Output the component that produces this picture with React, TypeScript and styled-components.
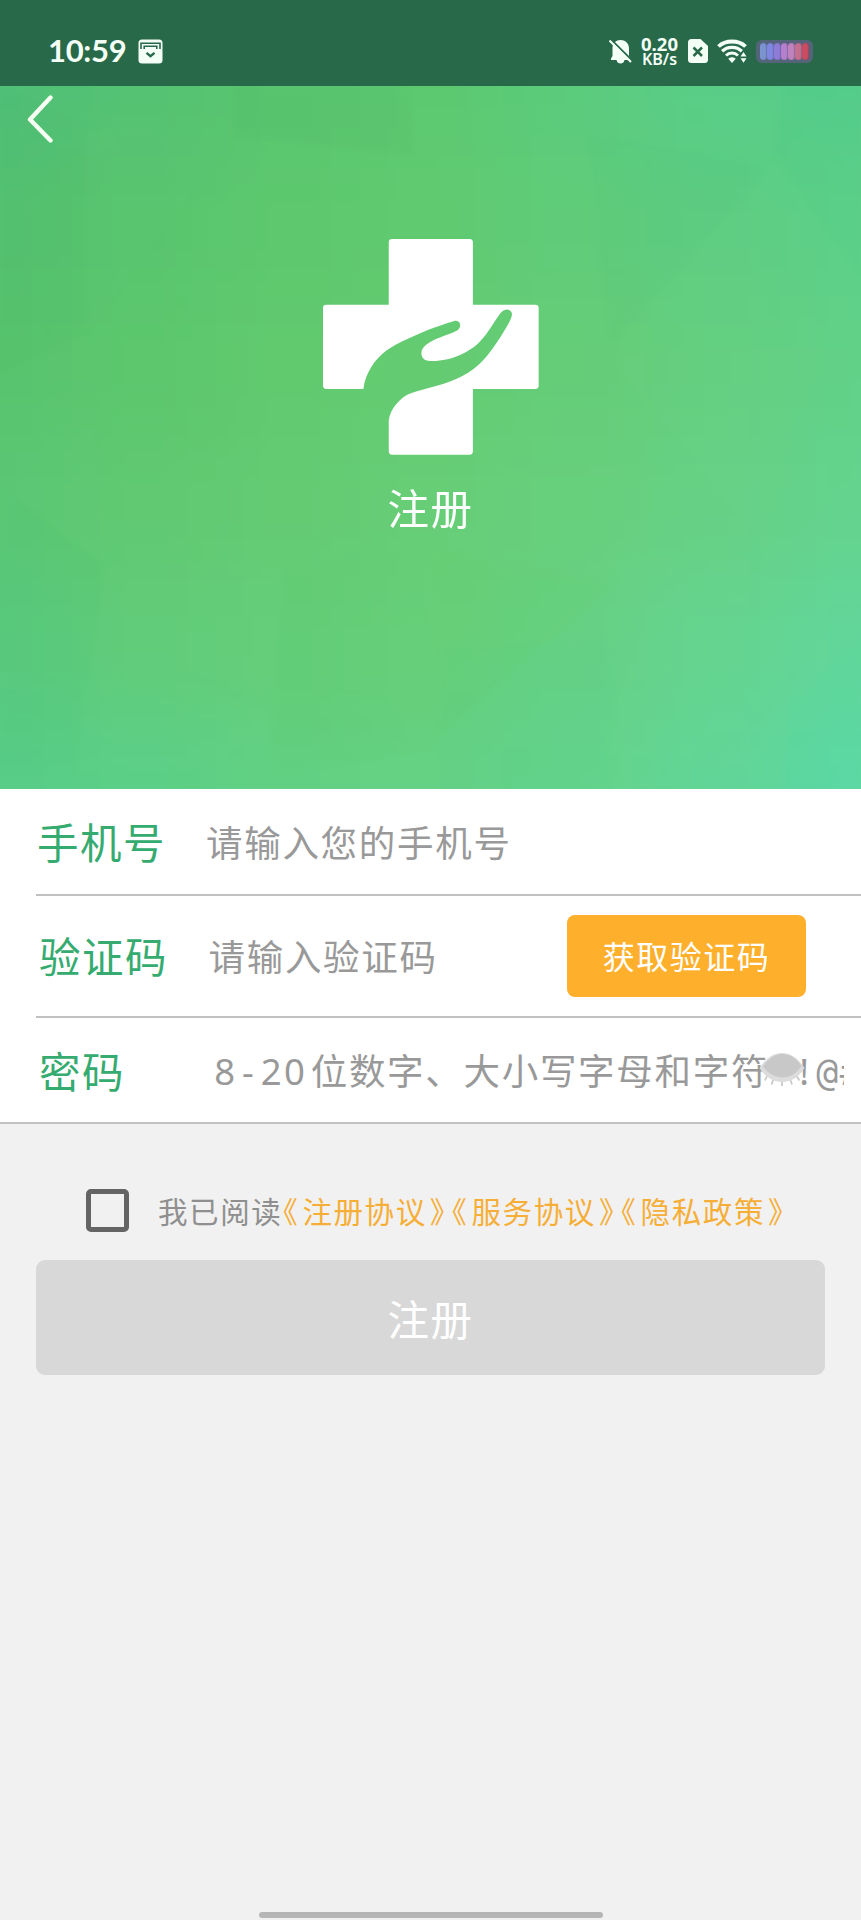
import React from "react";
import styled, { createGlobalStyle } from "styled-components";

const GlobalStyle = createGlobalStyle`
  * { box-sizing: border-box; }
  body {
    margin: 0;
    background: #f1f1f1;
    font-family: "Noto Sans CJK SC", "Noto Sans", sans-serif;
  }
`;

const Screen = styled.main`
  width: 861px;
  height: 1920px;
  display: flex;
  flex-direction: column;
  background: #f1f1f1;
  overflow: hidden;
`;

const StatusBar = styled.header`
  height: 86px;
  flex: none;
  display: flex;
  align-items: center;
  padding: 16px 48px 0 48px;
  background: #28694a;
  color: #f4fff6;
`;

const Clock = styled.span`
  width: 90px;
  padding-bottom: 2px;
  font: 700 31px/36px Lato, sans-serif;
  letter-spacing: -0.3px;
`;

const StatusIcons = styled.div`
  margin-left: auto;
  display: flex;
  align-items: center;
`;

const NetSpeed = styled.div`
  width: 39px;
  margin: 0 9px 0 8px;
  display: flex;
  flex-direction: column;
  align-items: center;
  font-family: "Noto Sans", sans-serif;
  font-weight: 700;
  white-space: nowrap;
`;

const SpeedValue = styled.span`
  font-size: 18.5px;
  line-height: 16px;
`;

const SpeedUnit = styled.span`
  font-size: 16px;
  font-weight: 600;
  line-height: 15px;
`;

const SimSlot = styled.span`
  display: flex;
  margin-right: 9px;
`;

const Battery = styled.div`
  width: 57px;
  height: 23px;
  margin-left: 9px;
  padding: 3px 4px;
  display: flex;
  border-radius: 6px;
  background: #54657a;
`;

const Cell = styled.i<{ $color: string }>`
  flex: 1;
  border-radius: 4px;
  background: ${(p) => p.$color};
  box-shadow: inset -1px 0 1px rgba(60, 60, 110, 0.35);
`;

const Hero = styled.section`
  height: 703px;
  flex: none;
  display: grid;
  background: #60ca76;
  > * {
    grid-area: 1 / 1;
  }
`;

const HeroContent = styled.div`
  z-index: 1;
  display: flex;
  flex-direction: column;
  align-items: center;
`;

const BackButton = styled.button`
  align-self: flex-start;
  height: 68px;
  padding: 0 0 2px 27px;
  border: 0;
  background: none;
  display: flex;
  align-items: center;
`;

const LogoSlot = styled.div`
  display: flex;
  margin-top: 85px;
`;

const Title = styled.h1`
  margin: 22px 0 0;
  font-size: 41.5px;
  line-height: 60px;
  font-weight: 400;
  letter-spacing: 1.5px;
  color: #fff;
`;

const Form = styled.section`
  flex: none;
  padding-left: 36px;
  background: #fff;
  box-shadow: inset 0 -2px #c1c1c1;
`;

const Row = styled.div<{ $height: number; $last?: boolean }>`
  position: relative;
  height: ${(p) => p.$height}px;
  display: flex;
  align-items: center;
  border-bottom: ${(p) => (p.$last ? "0" : "2px solid #c1c1c1")};
`;

const PasswordRow = styled(Row)`
  padding-right: 17px;
`;

const Label = styled.label<{ $indent?: number }>`
  width: 170px;
  flex: none;
  padding-left: ${(p) => p.$indent ?? 1}px;
  padding-bottom: 2px;
  font-size: 41.5px;
  line-height: 60px;
  letter-spacing: 1.5px;
  color: #36ab70;
`;

const Hint = styled.div<{ $indent?: number }>`
  flex: 1;
  padding-left: ${(p) => p.$indent ?? 0}px;
  font-size: 36.5px;
  line-height: 54px;
  letter-spacing: 1.7px;
  white-space: nowrap;
  overflow: hidden;
  color: #999;
`;

const Mono = styled.span<{ $narrow?: boolean; $gap?: number }>`
  display: inline-block;
  width: 23.3px;
  margin-right: ${(p) => p.$gap ?? 0}px;
  text-align: center;
  letter-spacing: 0;
  font-family: ${(p) => (p.$narrow ? '"DejaVu Sans Mono", monospace' : '"Noto Sans", sans-serif')};
`;

const CodeButton = styled.button`
  width: 239px;
  height: 82px;
  margin-right: 55px;
  padding: 0 0 2px;
  border: 0;
  border-radius: 8px;
  background: #feb02d;
  color: #fff;
  font: 400 32px/48px "Noto Sans CJK SC", sans-serif;
  letter-spacing: 1.5px;
`;

const EyeToggle = styled.span`
  position: absolute;
  right: 56px;
  top: 34px;
  display: flex;
`;

const Agreement = styled.div`
  flex: none;
  display: flex;
  align-items: center;
  height: 44px;
  margin: 64px 0 0 86px;
`;

const Checkbox = styled.span`
  width: 43px;
  height: 43px;
  margin-right: 29px;
  border: 5px solid #646464;
  border-radius: 5px;
`;

const AgreementText = styled.span`
  display: flex;
  font-size: 29.5px;
  line-height: 44px;
  letter-spacing: 1.6px;
  white-space: nowrap;
  color: #8f8f8f;
`;

const Link = styled.a`
  display: flex;
  color: #f6ae37;
`;

const Bracket = styled.span<{ $open?: boolean }>`
  width: ${(p) => (p.$open ? 20 : 24.7)}px;
  padding-left: ${(p) => (p.$open ? 0.5 : 3)}px;
  letter-spacing: 0;
  font-feature-settings: "halt";
`;

const SubmitButton = styled.button`
  flex: none;
  height: 115px;
  margin: 28px 36px 0;
  border: 0;
  border-radius: 9px;
  background: #d8d8d8;
  color: #fff;
  font: 400 41.5px/60px "Noto Sans CJK SC", sans-serif;
  letter-spacing: 1.5px;
`;

const HomeBar = styled.div`
  width: 344px;
  height: 6px;
  margin: auto auto 2px;
  border-radius: 3px;
  background: #b5b5b5;
`;

const batteryColors = ["#7b93cf", "#8087e0", "#8f7cd6", "#b47fcb", "#c082bd", "#c56f8f", "#c94c61"];

const mesh = [
  ["#50c077", "#55c273", "#59c66f", "#5cc970", "#5bcb7c", "#58cd86", "#57cd8a"],
  ["#54c270", "#58c56e", "#5dc86e", "#60ca70", "#60cc7a", "#5fcd82", "#5dd088"],
  ["#57c46d", "#5cc76d", "#61ca6f", "#64cb71", "#65cd78", "#64cf80", "#62d188"],
  ["#5ac774", "#60c972", "#64cb73", "#67ce77", "#67d07d", "#66d185", "#63d38e"],
  ["#5ac97c", "#60cc79", "#63ce79", "#67d07b", "#66d184", "#64d48f", "#61d699"],
  ["#58cd88", "#5bcf87", "#62d083", "#65d184", "#64d38a", "#60d596", "#5dd8a3"],
];

const facets = [
  { points: "0,0 90,40 86,250 0,290", tone: "#000", opacity: 0.006 },
  { points: "230,0 410,0 415,70 235,50", tone: "#000", opacity: 0.01 },
  { points: "235,50 86,245 86,45", tone: "#fff", opacity: 0.012 },
  { points: "590,0 780,0 775,70 590,50", tone: "#fff", opacity: 0.012 },
  { points: "775,70 861,190 861,0 780,0", tone: "#00b8a0", opacity: 0.025 },
  { points: "590,50 770,80 610,260", tone: "#00b060", opacity: 0.02 },
  { points: "610,270 760,260 770,470", tone: "#fff", opacity: 0.012 },
  { points: "0,290 86,250 105,480 0,400", tone: "#fff", opacity: 0.01 },
  { points: "105,480 280,475 270,680 75,690", tone: "#fff", opacity: 0.01 },
  { points: "105,480 0,400 0,690 75,690", tone: "#00a060", opacity: 0.015 },
  { points: "285,480 430,460 440,660 270,690", tone: "#3fb830", opacity: 0.02 },
  { points: "430,460 610,500 440,650", tone: "#6acb40", opacity: 0.05 },
  { points: "440,560 620,555 600,703 440,703", tone: "#30d0b0", opacity: 0.04 },
  { points: "615,470 770,470 861,380 861,703 620,703", tone: "#fff", opacity: 0.01 },
  { points: "790,620 861,550 861,703 780,703", tone: "#30dcc0", opacity: 0.05 },
];

function HeroBackground() {
  return (
    <svg width="861" height="703" viewBox="0 0 861 703" aria-hidden="true">
      <defs>
        <filter id="blend" x="-20%" y="-20%" width="140%" height="140%" colorInterpolationFilters="sRGB">
          <feGaussianBlur stdDeviation="42" />
        </filter>
        <filter id="soft" colorInterpolationFilters="sRGB">
          <feGaussianBlur stdDeviation="3" />
        </filter>
      </defs>
      <g filter="url(#blend)">
        <rect x="-200" y="-200" width="1261" height="1103" fill="#5fcb79" />
        {mesh.map((row, r) =>
          row.map((color, c) => {
            const left = c === 0 ? -200 : c * 143.5 - 72;
            const right = c === 6 ? 1061 : c * 143.5 + 72;
            const top = r === 0 ? -200 : r * 140.6 - 71;
            const bottom = r === 5 ? 903 : r * 140.6 + 71;
            return <rect key={`${r}-${c}`} x={left} y={top} width={right - left} height={bottom - top} fill={color} />;
          })
        )}
      </g>
      <g filter="url(#soft)">
        {facets.map((f) => (
          <polygon key={f.points} points={f.points} fill={f.tone} opacity={f.opacity} />
        ))}
      </g>
    </svg>
  );
}

function HandCrossLogo() {
  return (
    <svg width="216" height="216" viewBox="69 57 647 647" aria-hidden="true">
      <path
        fill="#fff"
        d="M276 57H508q10 0 10 10V254H705q10 0 10 10V496q0 10-10 10H518V693q0 10-10 10H276q-10 0-10-10V600C270 566 300 530 334 518C385 502 435 494 485 468C545 438 573 392 604 345C620 318 632 302 635 284C636 265 612 263 600 280C582 303 566 335 541 362C508 400 440 427 385 422C359 418 357 390 378 374C405 352 440 347 472 330C488 317 478 297 460 303C400 320 310 357 260 390C225 415 195 460 190 506H79q-10 0-10-10V264q0-10 10-10H266V67q0-10 10-10Z"
      />
    </svg>
  );
}

function AppBadge() {
  return (
    <svg width="25" height="25" viewBox="0 0 25 25" fill="none" aria-hidden="true">
      <rect x="0.5" y="0.5" width="24" height="24" rx="3.5" fill="#f4fff6" />
      <path d="M3 10V4.2H22V10M6.2 10V7.2H18.8V10" stroke="#28694a" strokeWidth="1.6" />
      <path d="M8.500 13.800L12.500 17.200L16.500 13.800" stroke="#28694a" strokeWidth="2.400" />
    </svg>
  );
}

function MutedBell() {
  return (
    <svg width="23" height="25" viewBox="0 0 23 25" aria-hidden="true">
      <path fill="#f4fff6" d="M2 19.5L3.5 17V9.5C3.5 4 7 1 11.5 1S20 4 20 9.5V17L21.5 19.5V21H2ZM7.5 21H15.5C15 23.5 13.5 24.5 11.5 24.5S8 23.5 7.5 21Z" />
      <path d="M2 0.5L23 21.5" stroke="#28694a" strokeWidth="2" />
      <path d="M0.5 1.5L22 23" stroke="#f4fff6" strokeWidth="2" />
    </svg>
  );
}

function SimCard() {
  return (
    <svg width="20" height="24" viewBox="0 0 20 24" aria-hidden="true">
      <path fill="#f4fff6" d="M3.5 0H12.5L20 7V20.5Q20 24 16.5 24H3.5Q0 24 0 20.5V3.5Q0 0 3.5 0Z" />
      <path d="M5.5 8.5L14 17M14 8.5L5.5 17" stroke="#28694a" strokeWidth="2.5" />
    </svg>
  );
}

function Wifi() {
  return (
    <svg width="30" height="24" viewBox="0 0 30 24" fill="none" aria-hidden="true">
      <path d="M1.5 7.5C8.5 0.8 21.5 0.8 28.5 7.5" stroke="#f4fff6" strokeWidth="3.8" />
      <path d="M5.2 12.2C10.5 7 19.5 7 24.8 12.2" stroke="#f4fff6" strokeWidth="3.3" />
      <path d="M9 16.500C12.500 13 17.500 13 21 16.500" stroke="#f4fff6" strokeWidth="3" />
      <path d="M11.300 19.800C13.500 17.800 16.500 17.800 18.700 19.800L15 24Z" fill="#f4fff6" />
      <path d="M23.500 17.500L26.500 13L29.500 17.500ZM23.500 19.200L26.500 23.700L29.500 19.200Z" fill="#f4fff6" />
    </svg>
  );
}

function ClosedEye() {
  return (
    <svg width="46" height="36" viewBox="0 0 46 36" aria-hidden="true">
      <g stroke="#c9c9c9" strokeWidth="1.8">
        <path d="M8 24L6 28.5M14.500 27L12.500 32.500M23 28V34M31 27L33 32.500M37.500 24L40.500 28.500" />
      </g>
      <path d="M0.500 16C7 6 15 1 23 1S39 6 45.500 16C40 25 32 30 23 30S6 25 0.500 16Z" fill="#dcdcdc" />
      <path d="M4 14.500C10 6 16 2 23.500 2S37 6 42.500 14C37 22 31 25.500 23.500 25.500S10 22 4 14.500Z" fill="#c8c8c8" />
    </svg>
  );
}

export default function App() {
  return (
    <Screen>
      <GlobalStyle />
      <StatusBar>
        <Clock>10:59</Clock>
        <AppBadge />
        <StatusIcons>
          <MutedBell />
          <NetSpeed>
            <SpeedValue>0.20</SpeedValue>
            <SpeedUnit>KB/s</SpeedUnit>
          </NetSpeed>
          <SimSlot>
            <SimCard />
          </SimSlot>
          <Wifi />
          <Battery>
            {batteryColors.map((c) => (
              <Cell key={c} $color={c} />
            ))}
          </Battery>
        </StatusIcons>
      </StatusBar>

      <Hero>
        <HeroBackground />
        <HeroContent>
          <BackButton aria-label="返回">
            <svg width="27" height="48" viewBox="0 0 27 48" fill="none" aria-hidden="true">
              <path d="M23.5 2.5L3 24.5L23.5 45.5" stroke="#f7fff4" strokeWidth="4.4" strokeLinecap="round" strokeLinejoin="round" />
            </svg>
          </BackButton>
          <LogoSlot>
            <HandCrossLogo />
          </LogoSlot>
          <Title>注册</Title>
        </HeroContent>
      </Hero>

      <Form>
        <Row $height={107}>
          <Label>手机号</Label>
          <Hint>请输入您的手机号</Hint>
        </Row>
        <Row $height={122}>
          <Label $indent={3}>验证码</Label>
          <Hint $indent={2.5}>请输入验证码</Hint>
          <CodeButton>获取验证码</CodeButton>
        </Row>
        <PasswordRow $height={106} $last>
          <Label $indent={3}>密码</Label>
          <Hint $indent={7}>
            <Mono>8</Mono>
            <Mono>-</Mono>
            <Mono>2</Mono>
            <Mono $gap={4.5}>0</Mono>
            位数字、大小写字母和字符
            <Mono>~</Mono>
            <Mono>!</Mono>
            <Mono $narrow>@</Mono>
            <Mono $narrow>#</Mono>
          </Hint>
          <EyeToggle>
            <ClosedEye />
          </EyeToggle>
        </PasswordRow>
      </Form>

      <Agreement>
        <Checkbox role="checkbox" aria-checked="false" />
        <AgreementText>
          我已阅读
          {["注册协议", "服务协议", "隐私政策"].map((name) => (
            <Link key={name}>
              <Bracket $open>《</Bracket>
              {name}
              <Bracket>》</Bracket>
            </Link>
          ))}
        </AgreementText>
      </Agreement>
      <SubmitButton>注册</SubmitButton>
      <HomeBar />
    </Screen>
  );
}
